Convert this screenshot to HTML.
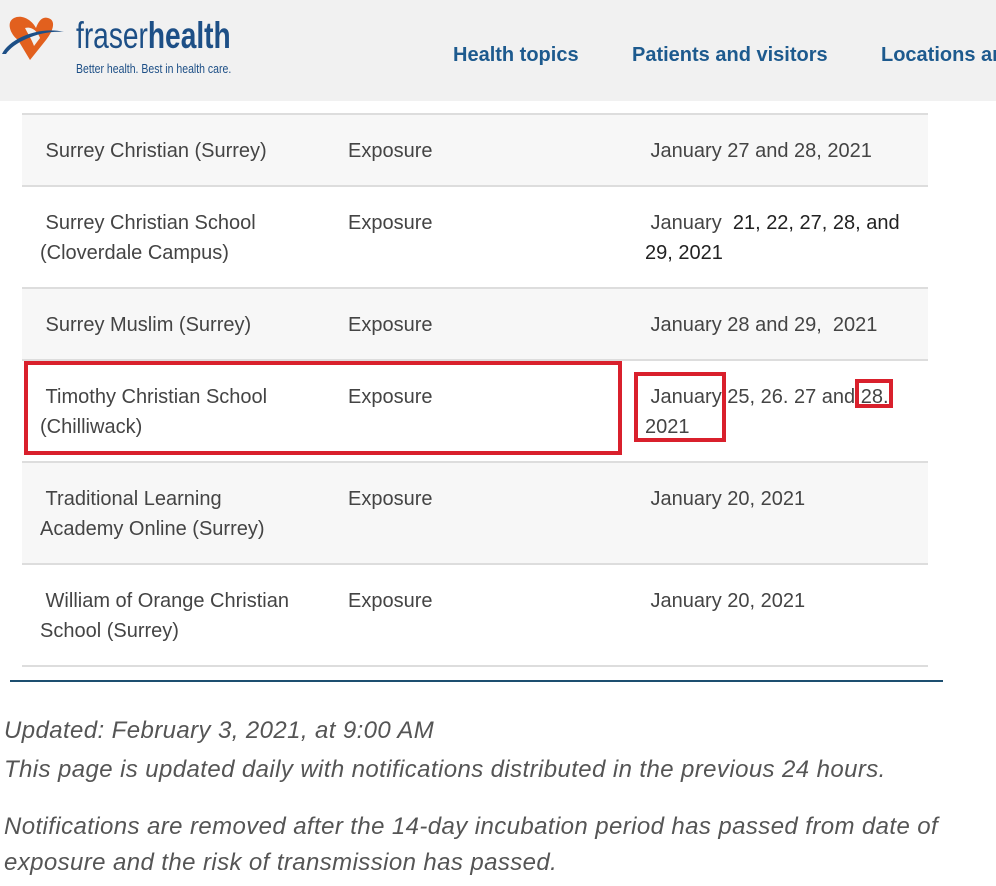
<!DOCTYPE html>
<html><head><meta charset="utf-8"><style>
*{margin:0;padding:0;box-sizing:border-box}
body{width:996px;height:886px;background:#fff;font-family:"Liberation Sans",Arial,sans-serif;position:relative;overflow:hidden;color:#444}
.hdr{position:absolute;left:0;top:0;width:996px;height:101px;background:#f1f1f1}
.nav{position:absolute;top:44px;font-size:20px;font-weight:bold;color:#1d5a8e;white-space:nowrap}
.row{position:absolute;left:22px;width:906px;border-bottom:2px solid #ddd}
.g{background:#f7f7f7}
.t{position:absolute;font-size:20px;line-height:30px;color:#444;white-space:nowrap}
.box{position:absolute;border:4px solid #d9202c}
.it{position:absolute;left:4px;font-style:italic;font-size:24px;letter-spacing:0.4px;color:#555;white-space:nowrap}
</style></head><body>
<div class="hdr"></div>
<svg style="position:absolute;left:0;top:10px" width="75" height="55" viewBox="0 0 75 55">
<path d="M14 8 C6 12 10 24 18 30 L30 50 L46 30 C54 20 56 10 48 8 C42 6 38 12 36 18 C32 10 22 4 14 8Z" fill="#e2601e"/>
<path d="M25 18 C28 24 32 30 34 36 L40 28 C38 22 32 16 25 18Z" fill="#f1f1f1"/>
<path d="M2 44 C10 28 40 16 64 22 C40 20 14 32 6 44Z" fill="#1d4f86"/>
</svg>
<div style="position:absolute;left:76px;top:15px;font-size:37px;color:#1d4f86;transform:scaleX(0.76);transform-origin:left top;white-space:nowrap">fraser<b>health</b></div>
<div style="position:absolute;left:76px;top:62px;font-size:12.5px;color:#1d4f86;transform:scaleX(0.84);transform-origin:left top;white-space:nowrap">Better health. Best in health care.</div>
<div class="nav" style="left:453px">Health topics</div>
<div class="nav" style="left:632px">Patients and visitors</div>
<div class="nav" style="left:881px">Locations and</div>

<div class="row g" style="top:113px;height:74px;border-top:2px solid #ddd"></div>
<div class="row" style="top:187px;height:102px"></div>
<div class="row g" style="top:289px;height:72px"></div>
<div class="row" style="top:361px;height:102px"></div>
<div class="row g" style="top:463px;height:102px"></div>
<div class="row" style="top:565px;height:102px"></div>

<div class="t" style="left:40px;top:136px">&nbsp;Surrey Christian (Surrey)</div>
<div class="t" style="left:348px;top:136px">Exposure</div>
<div class="t" style="left:645px;top:136px">&nbsp;January 27 and 28, 2021</div>

<div class="t" style="left:40px;top:208px">&nbsp;Surrey Christian School<br>(Cloverdale Campus)</div>
<div class="t" style="left:348px;top:208px">Exposure</div>
<div class="t" style="left:645px;top:208px">&nbsp;January&nbsp; <span style="color:#222">21, 22, 27, 28, and</span><br><span style="color:#222">29, 2021</span></div>

<div class="t" style="left:40px;top:310px">&nbsp;Surrey Muslim (Surrey)</div>
<div class="t" style="left:348px;top:310px">Exposure</div>
<div class="t" style="left:645px;top:310px">&nbsp;January 28 and 29,&nbsp; 2021</div>

<div class="t" style="left:40px;top:382px">&nbsp;Timothy Christian School<br>(Chilliwack)</div>
<div class="t" style="left:348px;top:382px">Exposure</div>
<div class="t" style="left:645px;top:382px">&nbsp;January 25, 26. 27 and 28.<br>2021</div>

<div class="t" style="left:40px;top:484px">&nbsp;Traditional Learning<br>Academy Online (Surrey)</div>
<div class="t" style="left:348px;top:484px">Exposure</div>
<div class="t" style="left:645px;top:484px">&nbsp;January 20, 2021</div>

<div class="t" style="left:40px;top:586px">&nbsp;William of Orange Christian<br>School (Surrey)</div>
<div class="t" style="left:348px;top:586px">Exposure</div>
<div class="t" style="left:645px;top:586px">&nbsp;January 20, 2021</div>

<div class="box" style="left:24px;top:361px;width:598px;height:94px"></div>
<div class="box" style="left:634px;top:372px;width:92px;height:70px"></div>
<div class="box" style="left:855px;top:379px;width:38px;height:29px"></div>

<div style="position:absolute;left:10px;top:680px;width:933px;height:2px;background:#1d4f70"></div>
<div class="it" style="top:717px">Updated: February 3, 2021, at 9:00 AM</div>
<div class="it" style="top:756px">This page is updated daily with notifications distributed in the previous 24 hours.</div>
<div class="it" style="top:813px">Notifications are removed after the 14-day incubation period has passed from date of</div>
<div class="it" style="top:849px">exposure and the risk of transmission has passed.</div>
</body></html>
